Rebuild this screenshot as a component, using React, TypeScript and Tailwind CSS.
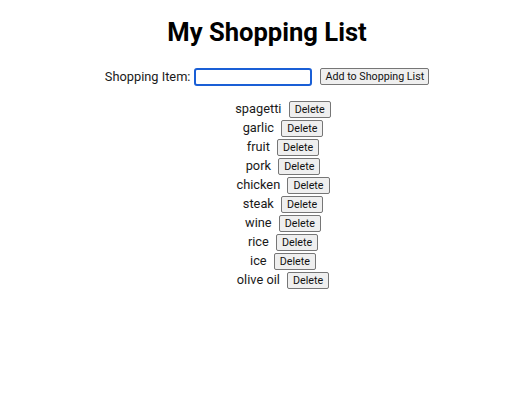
import React, { useState } from 'react';

const initialItems = ['spagetti', 'garlic', 'fruit', 'pork', 'chicken', 'steak', 'wine', 'rice', 'ice', 'olive oil'];

const btn =
  'bg-[#efefef] border border-[#767676] rounded-[2px] text-[10.7px] leading-[13px] py-[1px] text-[#111]';

const App: React.FC = () => {
  const [items, setItems] = useState<string[]>(initialItems);
  const [value, setValue] = useState('');

  const add = () => {
    if (!value.trim()) return;
    setItems([...items, value.trim()]);
    setValue('');
  };

  return (
    <div className="text-center pl-[24px] text-[#1a1a1a]" style={{ fontFamily: 'Roboto, "Liberation Sans", sans-serif' }}>
      <h1 className="text-[25.6px] font-bold pt-[17px] mb-[20px] leading-[30px] text-black">My Shopping List</h1>
      <div className="flex justify-center items-center h-[19px] text-[12.8px] leading-[15px]">
        <label className="mr-[4px]">Shopping Item:</label>
        <input
          autoFocus
          value={value}
          onChange={(e) => setValue(e.target.value)}
          className="w-[118px] h-[18px] border-2 border-[#1a5fd6] rounded-[3px] outline-none px-[2px] text-[11px]"
        />
        <button onClick={add} className={btn + ' ml-[8px] px-[4px]'}>
          Add to Shopping List
        </button>
      </div>
      <ul className="mt-[13px] pl-[32px]">
        {items.map((item, i) => (
          <li key={i} className="h-[19px] leading-[19px] text-[12.8px]">
            {item}{' '}
            <button className={btn + ' ml-[4px] px-[5px]'} onClick={() => setItems(items.filter((_, j) => j !== i))}>
              Delete
            </button>
          </li>
        ))}
      </ul>
    </div>
  );
};

export default App;
